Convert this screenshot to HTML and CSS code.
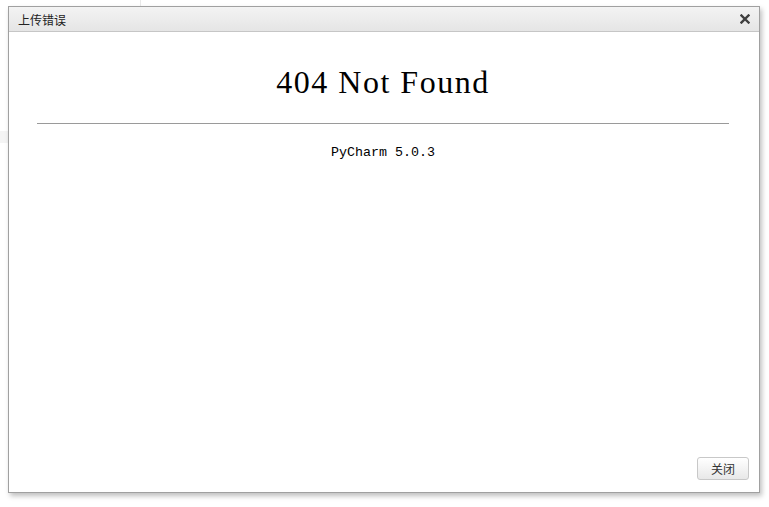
FILE: index.html
```html
<!DOCTYPE html>
<html lang="zh-CN">
<head>
    <meta charset="utf-8">
    <title>上传错误</title>
    <link rel="stylesheet" href="styles.css">
</head>
<body>
    <div class="page">
        <div class="dialog">
            <div class="dialog-title">
                <span class="title-text">上传错误</span>
                <svg class="close-x" width="10" height="10" viewBox="0 0 10 10">
                    <path d="M1.5 1.5 L8.5 8.5 M8.5 1.5 L1.5 8.5" stroke="#3f3f3f" stroke-width="2.4" stroke-linecap="square"/>
                </svg>
            </div>
            <div class="dialog-body">
                <div class="error-page">
                    <h1>404 Not Found</h1>
                    <hr>
                    <p class="server">PyCharm 5.0.3</p>
                </div>
            </div>
            <div class="dialog-footer">
                <button class="btn-close">关闭</button>
            </div>
        </div>
    </div>
</body>
</html>
```

FILE: styles.css
```css
html, body {
    margin: 0;
    height: 100%;
    background: #ffffff;
}

body {
    font-family: "Noto Sans CJK SC", "Liberation Sans", sans-serif;
    font-size: 12px;
    color: #333333;
}

.page {
    padding: 6px 0 0 8px;
    background:
        linear-gradient(#e9e9e9, #e9e9e9) 140px 0 / 1px 6px no-repeat,
        linear-gradient(#f4f4f4, #f4f4f4) 0 131px / 8px 12px no-repeat;
    height: 100%;
    box-sizing: border-box;
}

.dialog {
    width: 752px;
    height: 487px;
    box-sizing: border-box;
    border: 1px solid #a0a0a0;
    background: #ffffff;
    box-shadow: 2px 3px 5px rgba(0, 0, 0, 0.25);
    display: flex;
    flex-direction: column;
}

.dialog-title {
    height: 24px;
    border-bottom: 1px solid #c6c6c6;
    background: linear-gradient(#f3f3f3, #e5e5e5);
    display: flex;
    align-items: center;
    justify-content: space-between;
    padding: 0 9px 0 9px;
}

.title-text {
    font-size: 12px;
    color: #222222;
}

.close-x {
    display: block;
}

.dialog-body {
    flex: 1;
    padding: 0 30px 0 28px;
}

.error-page h1 {
    font-family: "Liberation Serif", serif;
    font-weight: normal;
    font-size: 32px;
    letter-spacing: 1.5px;
    color: #000000;
    text-align: center;
    margin: 32px 0 0;
    line-height: 37px;
}

.error-page hr {
    border: 0;
    border-top: 1px solid #9a9a9a;
    height: 0;
    margin: 22px 0 0;
}

.server {
    font-family: "Liberation Mono", monospace;
    font-size: 13.33px;
    color: #000000;
    text-align: center;
    margin: 21px 0 0;
}

.dialog-footer {
    display: flex;
    justify-content: flex-end;
    padding: 0 10px 12px 0;
}

.btn-close {
    width: 52px;
    height: 23px;
    font-family: "Noto Sans CJK SC", sans-serif;
    font-size: 12px;
    color: #333333;
    border: 1px solid #c8c8c8;
    border-radius: 3px;
    background: linear-gradient(#ffffff, #e8e8e8);
    padding: 0;
}
```
